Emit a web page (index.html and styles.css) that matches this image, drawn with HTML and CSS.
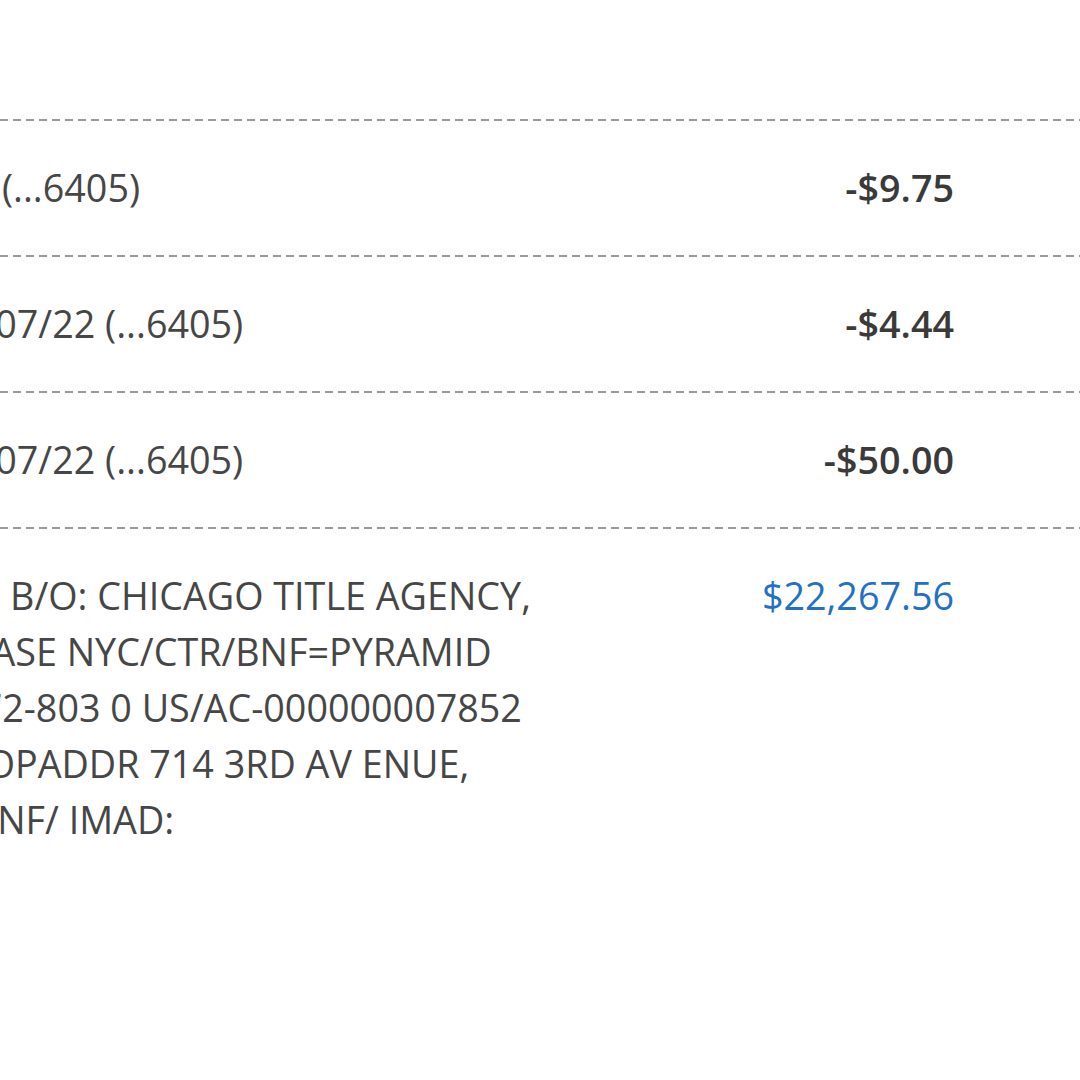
FILE: index.html
```html
<!DOCTYPE html>
<html lang="en">
<head>
<meta charset="utf-8">
<title>Transactions</title>
<link rel="stylesheet" href="styles.css">
</head>
<body>
<div class="list">
  <div class="row">
    <div class="desc"><span class="line">Card Purchase 07/21 (...6405)</span></div>
    <div class="amount">-$9.75</div>
  </div>
  <div class="row">
    <div class="desc"><span class="line">Card Purchase Store 07/22 (...6405)</span></div>
    <div class="amount">-$4.44</div>
  </div>
  <div class="row">
    <div class="desc"><span class="line">Card Purchase Store 07/22 (...6405)</span></div>
    <div class="amount">-$50.00</div>
  </div>
  <div class="row">
    <div class="desc">
      <span class="line">Fedwire: 021000021S B/O: CHICAGO TITLE AGENCY,</span>
      <span class="line">VIA: s JPMORGAN CHASE NYC/CTR/BNF=PYRAMID</span>
      <span class="line">INC NEW YORK NY 572-803 0 US/AC-000000007852</span>
      <span class="line">RFB=O/B CHASE NA/OPADDR 714 3RD AV ENUE,</span>
      <span class="line">NEW YORK NY 1017BNF/ IMAD:</span>
    </div>
    <div class="amount credit">$22,267.56</div>
  </div>
</div>
</body>
</html>
```

FILE: styles.css
```css
html, body {
  margin: 0;
  padding: 0;
  background: #ffffff;
}

body {
  width: 1080px;
  height: 1080px;
  overflow: hidden;
  font-family: "Open Sans", "Liberation Sans", sans-serif;
  color: #464646;
}

.list {
  padding-top: 119px;
}

.row {
  display: flex;
  align-items: flex-start;
  justify-content: space-between;
  padding: 39px 126px 39px 0;
  background-image: repeating-linear-gradient(to right, #9a9a9a 0 8px, transparent 8px 13px);
  background-size: 100% 2px;
  background-repeat: no-repeat;
  background-position: 0 0;
  border-top: 2px solid transparent;
  background-origin: border-box;
}

.desc {
  margin-left: -373px;
  font-size: 37.7px;
  line-height: 56px;
}

.line {
  display: block;
  white-space: nowrap;
}

.amount {
  font-size: 37.7px;
  line-height: 56px;
  font-weight: 600;
  color: #3a3a3a;
  white-space: nowrap;
}

.amount.credit {
  color: #2370c4;
  font-weight: 500;
}
```
